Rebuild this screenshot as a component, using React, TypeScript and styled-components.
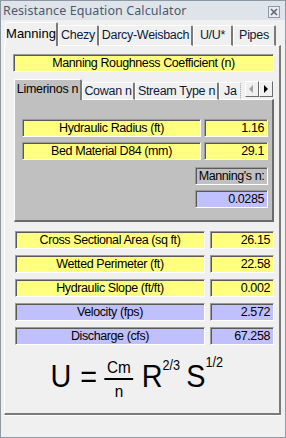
import React from 'react';
import styled, { createGlobalStyle } from 'styled-components';

const Global = createGlobalStyle`
  html, body {
    margin: 0;
    padding: 0;
    background: #f0f0f0;
  }
  * {
    box-sizing: border-box;
  }
`;

const Window = styled.div`
  width: 286px;
  height: 438px;
  display: flex;
  flex-direction: column;
  background: #f0f0f0;
  border: 1px solid #8e99a6;
  font-family: "Liberation Sans", Arial, sans-serif;
  color: #000;
  overflow: hidden;
`;

const TitleBar = styled.div`
  height: 19px;
  flex: none;
  display: flex;
  align-items: center;
  justify-content: space-between;
  padding: 0 5px 0 2px;
  background: #dfe4ea;
  color: #4b5a6c;
  font-family: "Noto Sans", "DejaVu Sans", sans-serif;
  font-size: 12.5px;
  letter-spacing: 0.1px;
`;

const CloseBox = styled.div`
  width: 12px;
  height: 12px;
  margin-top: 3px;
  border: 1px solid #8d9aab;
  background: #e8ecf1;
  display: flex;
  align-items: center;
  justify-content: center;
`;

const Body = styled.div`
  flex: 1;
  display: flex;
  flex-direction: column;
  padding: 2px 4px 0 3px;
`;

const TabRow = styled.div`
  display: flex;
  align-items: flex-end;
  height: 24px;
  padding-left: 1px;
  position: relative;
  z-index: 1;
`;

const TopTab = styled.div<{ $active?: boolean; $w: number }>`
  width: ${({ $w }) => $w}px;
  height: ${({ $active }) => ($active ? 24 : 21)}px;
  display: flex;
  align-items: center;
  justify-content: center;
  padding-bottom: ${({ $active }) => ($active ? 3 : 1)}px;
  background: #f0f0f0;
  border-top: 1px solid #fff;
  border-left: 1px solid #fff;
  border-right: 2px solid #7a7a7a;
  border-bottom: ${({ $active }) => ($active ? 'none' : '1px solid #fff')};
  border-radius: 2px 2px 0 0;
  font-size: ${({ $active }) => ($active ? 13 : 12.5)}px;
  letter-spacing: ${({ $active }) => ($active ? 0 : -0.3)}px;
  color: ${({ $active }) => ($active ? '#000' : '#0d1b3a')};
  white-space: nowrap;
`;

const Panel = styled.div`
  height: 370px;
  display: flex;
  flex-direction: column;
  padding: 8px 5px 0 8px;
  border-top: 1px solid #fff;
  border-left: 1px solid #fff;
  border-right: 2px solid #7a7a7a;
  border-bottom: 2px solid #7a7a7a;
  margin-top: -1px;
`;

const Field = styled.div<{ $tone: 'yellow' | 'blue' | 'gray'; $align?: 'center' | 'right' }>`
  height: 18px;
  display: flex;
  align-items: center;
  justify-content: ${({ $align }) => ($align === 'right' ? 'flex-end' : 'center')};
  padding: 0 3px;
  background: ${({ $tone }) =>
    $tone === 'yellow' ? '#ffff80' : $tone === 'blue' ? '#c0c0ff' : '#c0c0c0'};
  border: 1px solid;
  border-color: #9a9a9a #fff #fff #9a9a9a;
  box-shadow: inset 1px 1px 0 #5a5a5a;
  font-size: 12.5px;
  letter-spacing: -0.4px;
  white-space: nowrap;
  overflow: hidden;
`;

const InnerTabs = styled.div`
  margin: 7px 0 0 1px;
  display: flex;
  flex-direction: column;
`;

const InnerTabRow = styled.div`
  display: flex;
  align-items: flex-end;
  height: 21px;
  position: relative;
  z-index: 1;
`;

const InnerStrip = styled.div`
  display: flex;
  align-items: flex-end;
  width: 230px;
  height: 21px;
  overflow: hidden;
`;

const InnerTab = styled.div<{ $active?: boolean; $w: number }>`
  flex: none;
  width: ${({ $w }) => $w}px;
  height: ${({ $active }) => ($active ? 21 : 18)}px;
  display: flex;
  align-items: center;
  justify-content: ${({ $w }) => ($w < 30 ? 'flex-start' : 'center')};
  padding: 0 0 ${({ $active }) => ($active ? 2 : 0)}px ${({ $w }) => ($w < 30 ? 4 : 0)}px;
  background: ${({ $active }) => ($active ? '#c0c0c0' : '#f0f0f0')};
  border-top: 1px solid #fff;
  border-left: 1px solid #fff;
  border-right: ${({ $w }) => ($w < 30 ? '1px dotted #9a9a9a' : '2px solid #7a7a7a')};
  border-bottom: ${({ $active }) => ($active ? 'none' : '1px solid #fff')};
  border-radius: 2px 2px 0 0;
  font-size: 12.5px;
  letter-spacing: -0.3px;
  color: ${({ $active }) => ($active ? '#000' : '#0d1b3a')};
  white-space: nowrap;
`;

const Scroller = styled.div`
  display: flex;
  margin: 0 1px 3px auto;
`;

const ScrollBtn = styled.div`
  width: 14px;
  height: 16px;
  display: flex;
  align-items: center;
  justify-content: center;
  background: #f0f0f0;
  border: 1px solid;
  border-color: #fff #6a6a6a #6a6a6a #fff;
`;

const InnerPanel = styled.div`
  height: 123px;
  margin-top: -1px;
  background: #c0c0c0;
  border-top: 1px solid #fff;
  border-left: 1px solid #fff;
  border-right: 2px solid #6a6a6a;
  border-bottom: 2px solid #6a6a6a;
  padding: 19px 4px 0 7px;
  display: flex;
  flex-direction: column;
  gap: 5px;
`;

const InnerGrid = styled.div`
  display: grid;
  grid-template-columns: 1fr 64px;
  row-gap: 5px;
  column-gap: 3px;
`;

const ResultCol = styled.div`
  width: 73px;
  margin: 2px 0 0 auto;
  display: flex;
  flex-direction: column;
  gap: 5px;
`;

const MainGrid = styled.div`
  margin: 9px 0 0 2px;
  display: grid;
  grid-template-columns: 1fr 64px;
  row-gap: 6px;
  column-gap: 5px;
`;

const Equation = styled.div`
  height: 62px;
  display: flex;
  align-items: center;
  justify-content: center;
  padding-right: 8px;
  transform: scaleX(0.9);
`;

const Big = styled.span<{ $gap?: number }>`
  font-size: 32px;
  line-height: 1;
  margin-right: ${({ $gap }) => $gap ?? 0}px;
`;

const Frac = styled.span`
  display: inline-flex;
  flex-direction: column;
  align-items: center;
  margin: 6px 9px 0 0;
  font-size: 17px;
  line-height: 1;
`;

const FracTop = styled.span`
  padding: 0 3px 2px;
  border-bottom: 2px solid #000;
`;

const FracBottom = styled.span`
  padding-top: 3px;
`;

const Power = styled.span<{ $up: number }>`
  align-self: flex-start;
  font-size: 14px;
  margin-top: ${({ $up }) => $up}px;
  margin-right: 7px;
`;

const StatusBar = styled.div`
  flex: 1;
  border-top: 1px solid #fff;
`;

const inner = [
  ['Hydraulic Radius (ft)', '1.16'],
  ['Bed Material D84 (mm)', '29.1'],
];

const rows: [string, string, 'yellow' | 'blue'][] = [
  ['Cross Sectional Area (sq ft)', '26.15', 'yellow'],
  ['Wetted Perimeter (ft)', '22.58', 'yellow'],
  ['Hydraulic Slope (ft/ft)', '0.002', 'yellow'],
  ['Velocity (fps)', '2.572', 'blue'],
  ['Discharge (cfs)', '67.258', 'blue'],
];

const Arrow = ({ dir, color }: { dir: 'left' | 'right'; color: string }) => (
  <svg width="6" height="8" viewBox="0 0 6 8">
    {dir === 'left' ? (
      <polygon points="4,0 4,8 0,4" fill={color} />
    ) : (
      <polygon points="1,0 1,8 5,4" fill={color} />
    )}
  </svg>
);

export default function App() {
  return (
    <Window>
      <Global />
      <TitleBar>
        <span>Resistance Equation Calculator</span>
        <CloseBox>
          <svg width="8" height="8" viewBox="0 0 8 8">
            <path d="M1 1 L7 7 M7 1 L1 7" stroke="#5b6676" strokeWidth="1.6" />
          </svg>
        </CloseBox>
      </TitleBar>
      <Body>
        <TabRow>
          <TopTab $active $w={53}>Manning</TopTab>
          <TopTab $w={41}>Chezy</TopTab>
          <TopTab $w={94}>Darcy-Weisbach</TopTab>
          <TopTab $w={40}>U/U*</TopTab>
          <TopTab $w={43}>Pipes</TopTab>
        </TabRow>
        <Panel>
          <Field $tone="yellow">Manning Roughness Coefficient (n)</Field>
          <InnerTabs>
            <InnerTabRow>
              <InnerStrip>
                <InnerTab $active $w={68}>Limerinos n</InnerTab>
                <InnerTab $w={53}>Cowan n</InnerTab>
                <InnerTab $w={84}>Stream Type n</InnerTab>
                <InnerTab $w={22}>Ja</InnerTab>
              </InnerStrip>
              <Scroller>
                <ScrollBtn>
                  <Arrow dir="left" color="#a0a0a0" />
                </ScrollBtn>
                <ScrollBtn>
                  <Arrow dir="right" color="#000" />
                </ScrollBtn>
              </Scroller>
            </InnerTabRow>
            <InnerPanel>
              <InnerGrid>
                {inner.map(([label, value]) => (
                  <React.Fragment key={label}>
                    <Field $tone="yellow">{label}</Field>
                    <Field $tone="yellow" $align="right">{value}</Field>
                  </React.Fragment>
                ))}
              </InnerGrid>
              <ResultCol>
                <Field $tone="gray">Manning's n:</Field>
                <Field $tone="blue" $align="right">0.0285</Field>
              </ResultCol>
            </InnerPanel>
          </InnerTabs>
          <MainGrid>
            {rows.map(([label, value, tone]) => (
              <React.Fragment key={label}>
                <Field $tone={tone}>{label}</Field>
                <Field $tone={tone} $align="right">{value}</Field>
              </React.Fragment>
            ))}
          </MainGrid>
          <Equation>
            <Big $gap={10}>U</Big>
            <Big $gap={8}>=</Big>
            <Frac>
              <FracTop>Cm</FracTop>
              <FracBottom>n</FracBottom>
            </Frac>
            <Big>R</Big>
            <Power $up={12}>2/3</Power>
            <Big>S</Big>
            <Power $up={9}>1/2</Power>
          </Equation>
        </Panel>
        <StatusBar />
      </Body>
    </Window>
  );
}
